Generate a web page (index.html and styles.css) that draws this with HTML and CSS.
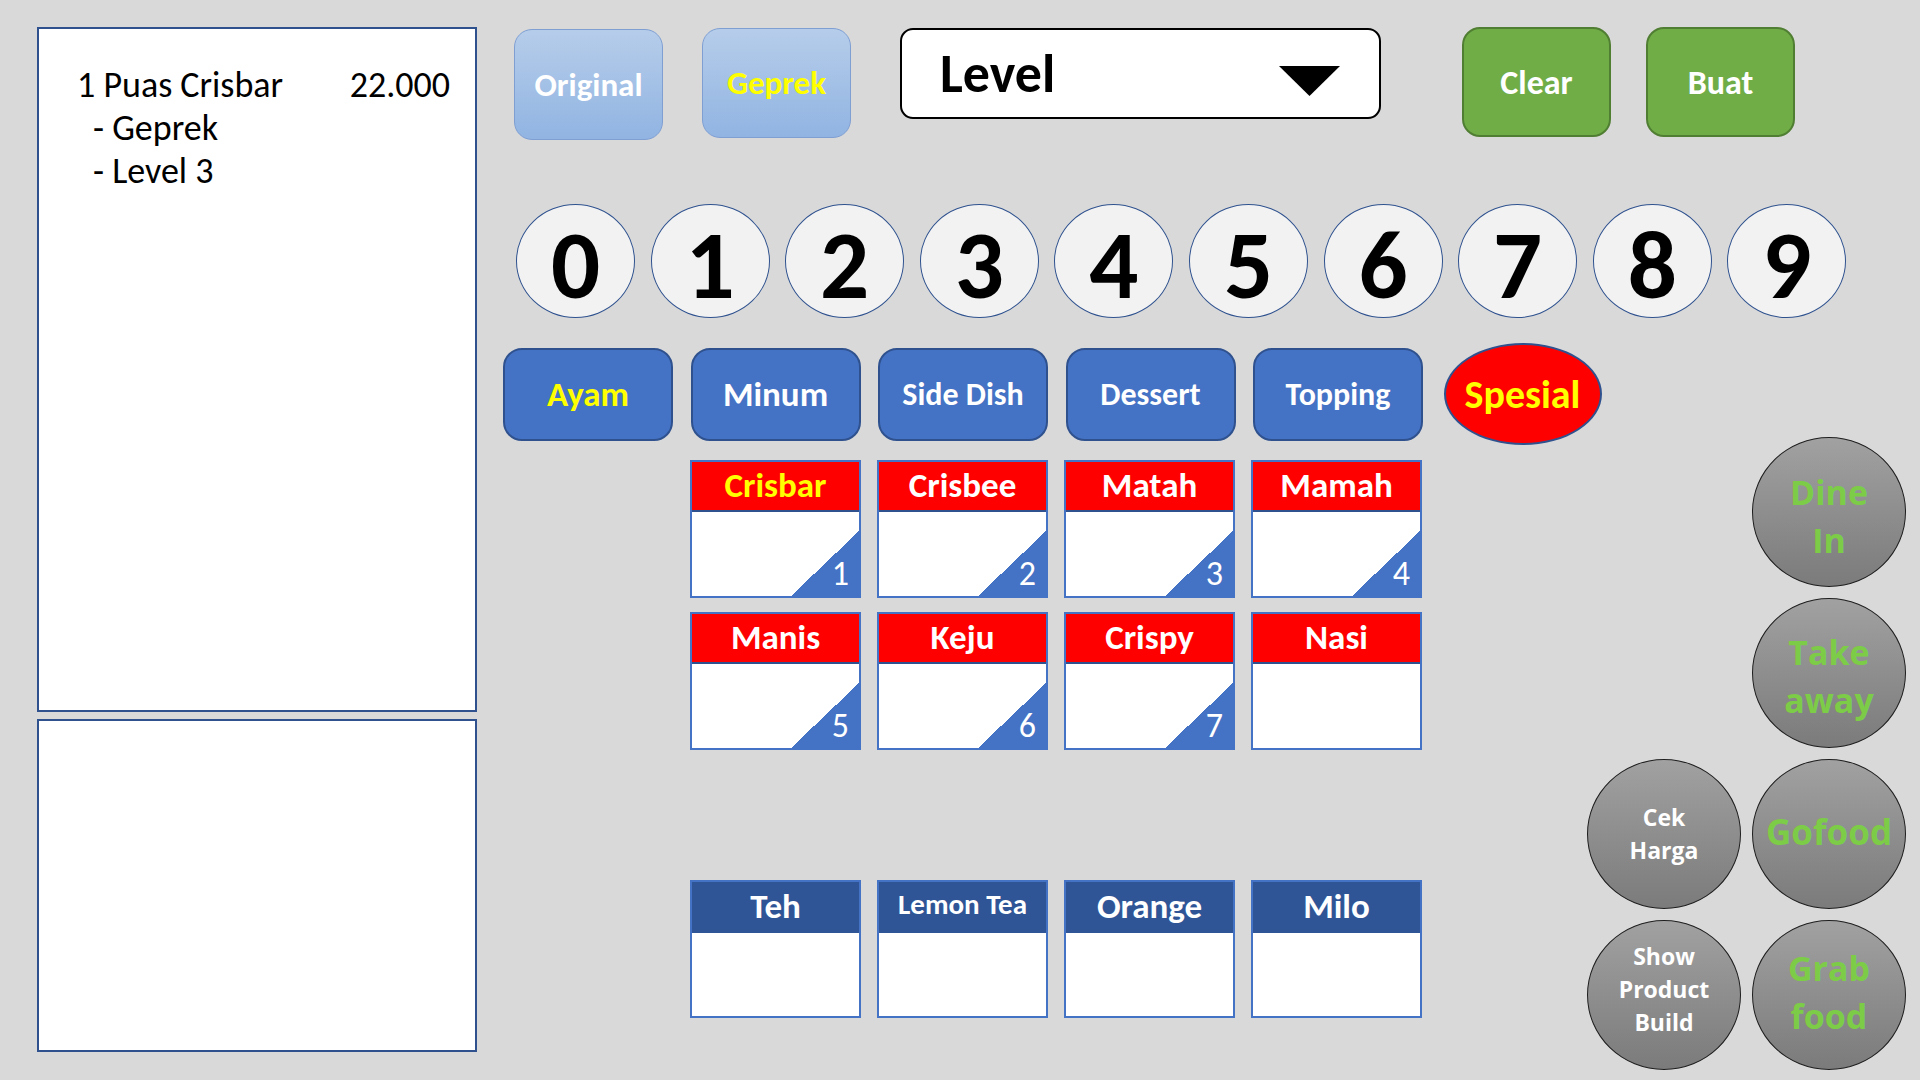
FILE: index.html
```html
<!DOCTYPE html>
<html lang="id">
<head>
<meta charset="utf-8">
<title>Kasir</title>
<link rel="stylesheet" href="styles.css">
</head>
<body>
<div class="app">
  <aside class="left">
    <div class="receipt">
      <div class="r-line"><span>1 Puas Crisbar</span><span>22.000</span></div>
      <div class="r-sub">- Geprek</div>
      <div class="r-sub">- Level 3</div>
    </div>
    <div class="notes"></div>
  </aside>

  <main class="main">
    <div class="topbar">
      <button class="btn-light b-original">Original</button>
      <button class="btn-light b-geprek">Geprek</button>
      <div class="level">
        <span>Level</span>
        <svg class="caret" width="61" height="30" viewBox="0 0 61 30"><polygon points="0,0 61,0 30.5,30" fill="#000"/></svg>
      </div>
      <button class="btn-green b-clear">Clear</button>
      <button class="btn-green b-buat">Buat</button>
    </div>

    <div class="numbers">
      <div class="num">0</div>
      <div class="num">1</div>
      <div class="num">2</div>
      <div class="num">3</div>
      <div class="num">4</div>
      <div class="num">5</div>
      <div class="num">6</div>
      <div class="num">7</div>
      <div class="num">8</div>
      <div class="num">9</div>
    </div>

    <div class="cats">
      <button class="cat cat-active">Ayam</button>
      <button class="cat">Minum</button>
      <button class="cat cat-small">Side Dish</button>
      <button class="cat cat-small">Dessert</button>
      <button class="cat cat-small">Topping</button>
      <button class="spesial">Spesial</button>
    </div>

    <div class="lower">
      <div class="products">
        <div class="grid">
          <div class="card"><div class="head head-red head-active">Crisbar</div><div class="body"><div class="corner">1</div></div></div>
          <div class="card"><div class="head head-red">Crisbee</div><div class="body"><div class="corner">2</div></div></div>
          <div class="card"><div class="head head-red">Matah</div><div class="body"><div class="corner">3</div></div></div>
          <div class="card"><div class="head head-red">Mamah</div><div class="body"><div class="corner">4</div></div></div>
          <div class="card"><div class="head head-red">Manis</div><div class="body"><div class="corner">5</div></div></div>
          <div class="card"><div class="head head-red">Keju</div><div class="body"><div class="corner">6</div></div></div>
          <div class="card"><div class="head head-red">Crispy</div><div class="body"><div class="corner">7</div></div></div>
          <div class="card"><div class="head head-red">Nasi</div><div class="body"></div></div>
        </div>
        <div class="grid drinks">
          <div class="card"><div class="head head-blue">Teh</div><div class="body"></div></div>
          <div class="card"><div class="head head-blue head-sm">Lemon Tea</div><div class="body"></div></div>
          <div class="card"><div class="head head-blue">Orange</div><div class="body"></div></div>
          <div class="card"><div class="head head-blue">Milo</div><div class="body"></div></div>
        </div>
      </div>

      <div class="orders">
        <button class="orb green o-dine">Dine<br>In</button>
        <button class="orb green o-take">Take<br>away</button>
        <button class="orb white o-cek">Cek<br>Harga</button>
        <button class="orb green o-go">Gofood</button>
        <button class="orb white o-show">Show<br>Product<br>Build</button>
        <button class="orb green o-grab">Grab<br>food</button>
      </div>
    </div>
  </main>
</div>
</body>
</html>
```
FILE: styles.css
```css
* { box-sizing: border-box; }

html, body {
  margin: 0;
  padding: 0;
  width: 1920px;
  height: 1080px;
  overflow: hidden;
  background: #d9d9d9;
  font-family: "Carlito", "Liberation Sans", sans-serif;
}

button {
  font-family: inherit;
  padding: 0;
  margin: 0;
  cursor: pointer;
}

.app {
  display: flex;
  align-items: flex-start;
  padding: 27px 0 0 37px;
}

/* ---------- left column ---------- */
.left {
  width: 440px;
  display: flex;
  flex-direction: column;
  gap: 7px;
}

.receipt {
  height: 685px;
  background: #fff;
  border: 2px solid #2f528f;
  padding: 35px 25px 0 38px;
  font-size: 36px;
  line-height: 43px;
  color: #000;
}

.r-line {
  display: flex;
  justify-content: space-between;
}

.r-sub {
  padding-left: 16px;
}

.notes {
  height: 333px;
  background: #fff;
  border: 2px solid #2f528f;
}

/* ---------- main ---------- */
.main {
  margin-left: 26px;
  display: flex;
  flex-direction: column;
}

.topbar {
  display: flex;
  align-items: flex-start;
  height: 113px;
}

.btn-light {
  width: 149px;
  height: 111px;
  border-radius: 18px;
  border: 1.5px solid #7f9fd3;
  background: linear-gradient(#b6cdea, #91b4e2);
  color: #fff;
  font-weight: 700;
  font-size: 33px;
}

.b-original { margin: 2px 0 0 11px; }
.b-geprek { margin: 1px 0 0 39px; color: #ffff00; height: 110px; }

.level {
  margin: 1px 0 0 49px;
  width: 481px;
  height: 91px;
  background: #fff;
  border: 2px solid #000;
  border-radius: 13px;
  display: flex;
  align-items: center;
  justify-content: space-between;
  padding: 0 39px 0 38px;
  font-weight: 700;
  font-size: 54px;
  color: #000;
}

.caret { margin-top: 14px; }

.btn-green {
  width: 149px;
  height: 110px;
  border-radius: 18px;
  border: 2px solid #507e32;
  background: #70ad47;
  color: #fff;
  font-weight: 700;
  font-size: 34px;
}

.b-clear { margin-left: 81px; }
.b-buat { margin-left: 35px; }

/* ---------- number pad ---------- */
.numbers {
  display: flex;
  gap: 15.6px;
  margin-top: 64px;
  padding-left: 13px;
}

.num {
  width: 119px;
  height: 114px;
  border-radius: 50%;
  background: #f2f2f2;
  border: 1.5px solid #2f528f;
  display: flex;
  align-items: center;
  justify-content: center;
  font-weight: 700;
  font-size: 97px;
  line-height: 1;
  color: #000;
  padding-top: 8px;
}

/* ---------- categories ---------- */
.cats {
  display: flex;
  align-items: center;
  gap: 17.5px;
  margin-top: 25px;
  height: 102px;
}

.cat {
  width: 170px;
  height: 93px;
  border-radius: 19px;
  background: #4472c4;
  border: 2px solid #2f528f;
  color: #fff;
  font-weight: 700;
  font-size: 35px;
}

.cat-small { font-size: 32px; }
.cat-active { color: #ffff00; }

.spesial {
  width: 158px;
  height: 102px;
  border-radius: 50%;
  background: #ff0000;
  border: 2.5px solid #2f528f;
  color: #ffff00;
  font-weight: 700;
  font-size: 40px;
  margin-left: 3px;
}

/* ---------- product cards ---------- */
.lower {
  display: flex;
  align-items: flex-start;
  margin-top: 15px;
  padding-left: 187px;
}

.products {
  width: 733px;
}

.grid {
  display: grid;
  grid-template-columns: repeat(4, 171px);
  grid-auto-rows: 138px;
  column-gap: 16px;
  row-gap: 14px;
}

.drinks {
  margin-top: 130px;
}

.card {
  border: 2px solid #4472c4;
  background: #fff;
  display: flex;
  flex-direction: column;
}

.head {
  height: 50px;
  display: flex;
  align-items: center;
  justify-content: center;
  color: #fff;
  font-weight: 700;
  font-size: 35px;
  line-height: 1;
  padding-bottom: 2px;
}

.head-red {
  background: #ff0000;
  border-bottom: 2px solid #2f528f;
}

.head-active { color: #ffff00; }

.head-blue {
  background: #2f5597;
  height: 51px;
}

.head-sm { font-size: 29px; padding-bottom: 6px; }

.body {
  flex: 1;
  display: flex;
  justify-content: flex-end;
  align-items: flex-end;
}

.corner {
  width: 68px;
  height: 65px;
  background: linear-gradient(to bottom right, rgba(68,114,196,0) 50%, #4472c4 50%);
  color: #fff;
  font-size: 34px;
  line-height: 34px;
  display: flex;
  justify-content: flex-end;
  align-items: flex-end;
  padding: 0 10px 5px 0;
}

/* ---------- order type circles ---------- */
.orders {
  margin: -23px 0 0 164px;
  display: grid;
  grid-template-columns: 154px 154px;
  grid-auto-rows: 150px;
  column-gap: 11px;
  row-gap: 11px;
}

.orb {
  border-radius: 50%;
  border: 1.5px solid #1e1e1e;
  background: linear-gradient(#a1a1a1, #7b7b7b);
  font-family: "Open Sans", "DejaVu Sans", sans-serif;
  font-weight: 700;
}

.green {
  color: #7dcc48;
  font-size: 34px;
  line-height: 48px;
}

.white {
  color: #fff;
  font-size: 23px;
  line-height: 33px;
}

.o-dine { grid-column: 2; grid-row: 1; padding-top: 7px; }
.o-take { grid-column: 2; grid-row: 2; padding-top: 6px; }
.o-cek { grid-column: 1; grid-row: 3; }
.o-go { grid-column: 2; grid-row: 3; font-size: 35px; padding-bottom: 5px; }
.o-show { grid-column: 1; grid-row: 4; padding-bottom: 11px; }
.o-grab { grid-column: 2; grid-row: 4; padding-bottom: 7px; }
```
